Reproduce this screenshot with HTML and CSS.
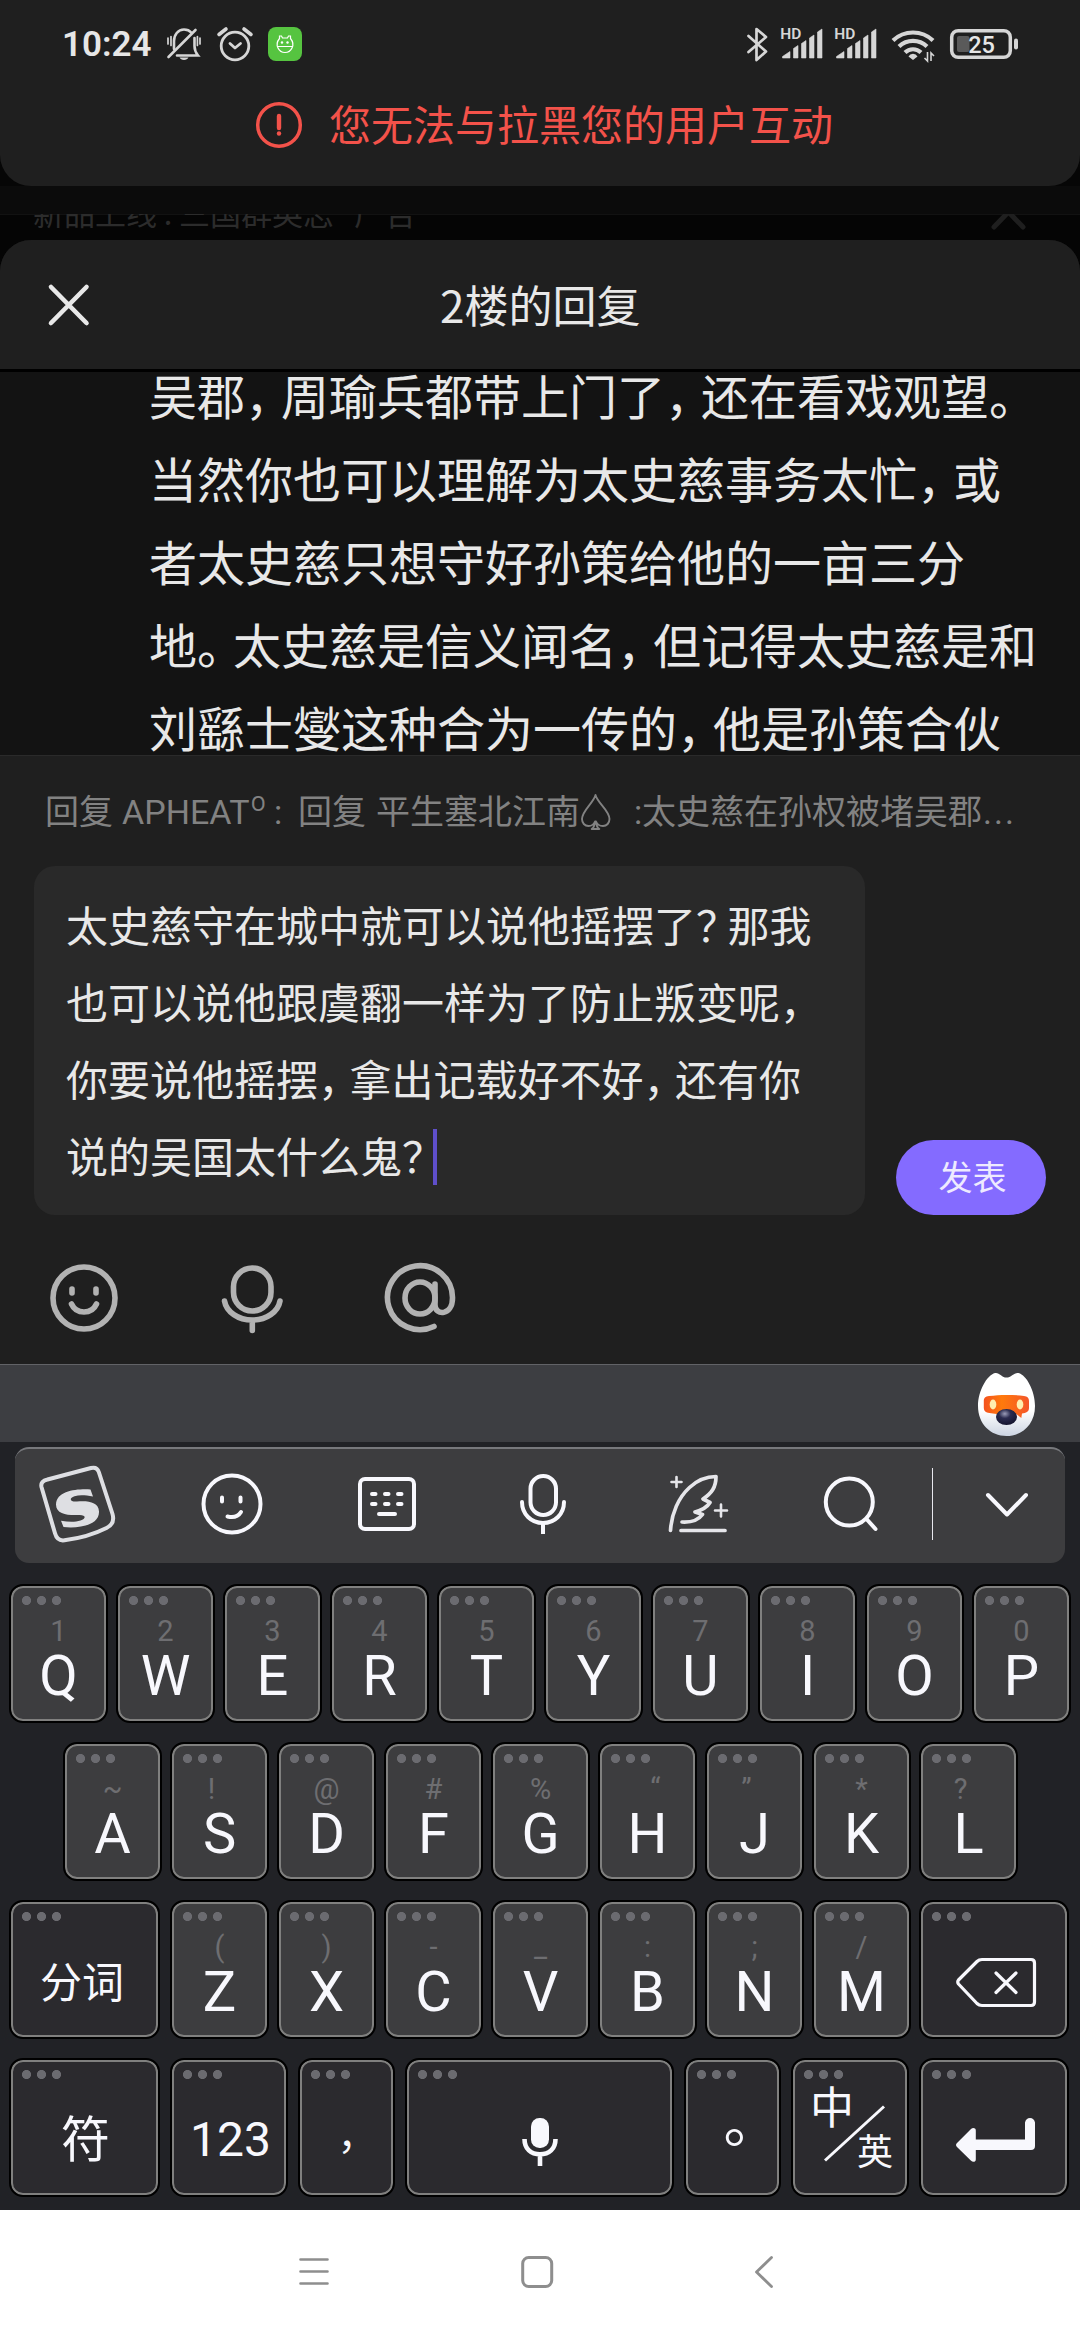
FILE: index.html
```html
<!DOCTYPE html>
<html lang="zh-CN">
<head>
<meta charset="utf-8">
<meta name="viewport" content="width=1080">
<title>2楼的回复</title>
<link rel="stylesheet" href="styles.css">
</head>
<body>
<div class="screen">

<div class="toast">
  <div class="status">
    <span class="clock">10:24</span>
    <svg class="st-bell" width="36" height="36" viewBox="166 27 36 36" fill="none" stroke="#d6d6d6" stroke-width="2.6" stroke-linecap="round">
      <path d="M174 49V41c0-6 4-11.500 10-11.500 3 0 5.500 1 7.200 3M194.500 38v8c0 5 1.500 7 3.500 9.500H177"/>
      <path d="M168.500 57 195.500 30"/><path d="M168 38v6M171 36.500v9M200 38v6M197.400 36.500v9" stroke-width="1.700"/>
      <path d="M179.500 57.500h9c-.8 1.600-2.300 2.500-4.500 2.500s-3.800-.9-4.500-2.500z" fill="#d6d6d6" stroke="none"/>
    </svg>
    <svg class="st-alarm" width="36" height="36" viewBox="217 27 36 36" fill="none" stroke="#d6d6d6" stroke-width="2.800" stroke-linecap="round" stroke-linejoin="round">
      <circle cx="235" cy="46" r="13.800"/><path d="m230 43.500 5 4.500 5.500-4.500"/><path d="m219 34.500 7-5.500M251 34.500 244 29" stroke-width="3.600"/>
    </svg>
    <svg class="st-app" width="34" height="34" viewBox="268 27 34 34">
      <rect x="268" y="27" width="34" height="34" rx="8" fill="#56c440"/>
      <path d="M279.500 38.500v-2.500h2l1 2h5l1-2h2v2.500c2.500 3 3 6.500 1.500 9.500-1.300 2.800-4 4.500-7 4.500s-5.700-1.700-7-4.500c-1.500-3-1-6.500 1.500-9.500zM277.500 46.500h15" fill="none" stroke="#fff" stroke-width="1.200"/>
      <circle cx="282" cy="42.500" r="1.200" fill="#fff"/><circle cx="287.500" cy="42.500" r="1.200" fill="#fff"/>
    </svg>
    <svg class="st-bt" width="22" height="36" viewBox="746 26 22 36" fill="none" stroke="#d6d6d6" stroke-width="2.700" stroke-linejoin="round" stroke-linecap="round">
      <path d="m747.500 36 17.500 15.500-9.500 8.500V29l9.500 8-17.500 15"/>
    </svg>
    <svg class="st-sig" width="43" height="34" viewBox="780 27 43 34" fill="#d6d6d6">
      <text class="hd" x="779.300" y="39">HD</text>
      <path d="M781.500 58v-1.500l7.500-5V58zM792.500 58V48.500l4.500-3V58zM800.500 58V43.500l4.500-3V58zM808.500 58V38l4.500-3V58zM816.500 58V32l4.500-3V58z" stroke="#d6d6d6" stroke-width=".6" stroke-linejoin="round"/>
    </svg>
    <svg class="st-sig2" width="43" height="34" viewBox="780 27 43 34" fill="#d6d6d6">
      <text class="hd" x="779.300" y="39">HD</text>
      <path d="M781.500 58v-1.500l7.500-5V58zM792.500 58V48.500l4.500-3V58zM800.500 58V43.500l4.500-3V58zM808.500 58V38l4.500-3V58zM816.500 58V32l4.500-3V58z" stroke="#d6d6d6" stroke-width=".6" stroke-linejoin="round"/>
    </svg>
    <svg class="st-wifi" width="44" height="36" viewBox="890 27 44 36" fill="none" stroke="#d6d6d6">
      <path d="M892 40.500a29 29 0 0 1 40 0M898 46.500a20.500 20.500 0 0 1 28 0M904 52.500a11.500 11.500 0 0 1 16 0" stroke-width="4.200"/>
      <path d="m907.500 56.500a5 5 0 0 1 9 0l-4.500 3.500z" fill="#d6d6d6" stroke="none"/>
      <path d="M926.500 52v9l-3-3M930 61v-8l3 3" stroke-width="1.600"/>
    </svg>
    <svg class="st-bat" width="69" height="32" viewBox="949 28 69 32">
      <rect x="950.700" y="30.700" width="58.600" height="26.600" rx="6.500" fill="none" stroke="#d6d6d6" stroke-width="3.500"/>
      <rect x="956" y="36" width="12.500" height="16" rx="2" fill="#5a5a5a"/><rect x="1013" y="38.500" width="4" height="11" rx="2" fill="#d6d6d6"/>
      <text class="pct" x="980.500" y="53" text-anchor="middle">25</text>
    </svg>
  </div>
  <div class="notice">
    <svg width="48" height="48" viewBox="255 100 48 48" fill="none" stroke="#f3524a" stroke-linecap="round"><circle cx="279" cy="124" r="21.300" stroke-width="3.500"/><path d="M279 115v12" stroke-width="4.400"/><circle cx="279" cy="132.500" r="2.200" fill="#f3524a" stroke="none"/></svg>
    <span>您无法与拉黑您的用户互动</span>
  </div>
</div>

<div class="behind">
  <span class="ad">新品上线<i class="ad-colon">:</i>三国群英志<i class="ad-gap"></i>广告</span>
  <svg class="ad-x" width="40" height="40" viewBox="988 194 40 40" stroke="#1f1f1f" stroke-width="5" stroke-linecap="round"><path d="m994 197 29 30M1023 197l-29 30"/></svg>
</div>

<div class="sheet">
  <div class="head">
    <svg width="44" height="44" viewBox="47 284 44 44" stroke="#e8e8e8" stroke-width="4.600" stroke-linecap="round"><path d="m51 288 35.500 36M86.500 288 51 324"/></svg>
    <h1>2楼的回复</h1>
  </div>
  <div class="post"><p>吴郡<i>，</i>周瑜兵都带上门了<i>，</i>还在看戏观望<i>。</i><br>当然你也可以理解为太史慈事务太忙<i>，</i>或<br>者太史慈只想守好孙策给他的一亩三分<br>地<i>。</i>太史慈是信义闻名<i>，</i>但记得太史慈是和<br>刘繇士燮这种合为一传的<i>，</i>他是孙策合伙</p></div>
</div>

<div class="composer">
  <div class="quote"><span>回复</span><span class="q-name">APHEAT<b class="ord">º</b></span><span class="q-c1">:</span><span class="q-r">回复</span><span class="q-who">平生塞北江南</span><svg class="q-spade" width="31" height="36" viewBox="581 792 31 36" fill="none" stroke="#828282" stroke-width="1.900" stroke-linejoin="round"><path d="M596.500 793c2 8 14 15.500 14 24 0 4-2.700 7-6.500 7-3.300 0-6-2-7-4.500.2 3 1 6 3.300 7.500h-7.600c2.300-1.500 3.100-4.500 3.300-7.500-1 2.500-3.200 4.500-6.500 4.500-3.800 0-6.500-3-6.500-7 0-8.500 11.500-16 13.500-24z"/></svg><span class="q-c2">:</span><span class="q-t">太史慈在孙权被堵吴郡</span><span class="q-e">...</span></div>
  <div class="entry">
    <div class="field">太史慈守在城中就可以说他摇摆了<i class="qm">？</i>那我<br>也可以说他跟虞翻一样为了防止叛变呢<i>，</i><br>你要说他摇摆<i>，</i>拿出记载好不好<i>，</i>还有你<br>说的吴国太什么鬼<i class="qm">？</i><b class="caret"></b></div>
    <button class="send">发表</button>
  </div>
  <div class="tools">
    <svg width="72" height="72" viewBox="48 1262 72 72" fill="none" stroke="#b2b2b2" stroke-width="5.600" stroke-linecap="round"><circle cx="84" cy="1298" r="31"/><path d="M72 1289v4M96 1289v4"/><path d="M71.500 1304c2.500 5.500 7 8 12.500 8s10-2.500 12.500-8" /></svg>
    <svg width="72" height="72" viewBox="216 1262 72 72" fill="none" stroke="#b2b2b2" stroke-width="5.600" stroke-linecap="round"><rect x="233.500" y="1268" width="37.500" height="43" rx="18.700"/><path d="M224.500 1301a28 22 0 0 0 55.500 0M252.300 1322v8.500"/></svg>
    <svg width="74" height="74" viewBox="384 1261 74 74" fill="none" stroke="#b2b2b2" stroke-width="5.600" stroke-linecap="round"><ellipse cx="420" cy="1298" rx="15" ry="16"/><path d="M435 1284v21c0 11 17.500 11 17.500-7a32.500 32 0 1 0-18.500 28.500"/></svg>
  </div>
</div>

<div class="keyboard">
  <div class="strip">
    <svg width="62" height="68" viewBox="975 1371 62 68">
      <defs>
        <linearGradient id="face" x1="0" y1="0" x2="0" y2="1"><stop offset=".6" stop-color="#fff"/><stop offset="1" stop-color="#ccd4e2"/></linearGradient>
        <linearGradient id="mask" x1="0" y1="0" x2="1" y2="0"><stop offset="0" stop-color="#f4511e"/><stop offset=".4" stop-color="#ff7a0c"/><stop offset="1" stop-color="#f4562a"/></linearGradient>
        <radialGradient id="nose" cx=".42" cy=".3" r=".7"><stop offset="0" stop-color="#9a9cb8"/><stop offset=".4" stop-color="#2b2c50"/><stop offset="1" stop-color="#14142e"/></radialGradient>
      </defs>
      <path d="M995 1373c4-1 7 4.500 11.500 4.500s8-5.500 12-4.500c8 2 16.500 18 16.500 33 0 18-12.500 30-28.500 30s-28.500-12-28.500-30c0-15 9-31 17-33z" fill="url(#face)"/>
      <path d="M989 1396c11-1.500 24-1.500 35 0 3.500.5 5 2 5 5v7c0 4-3 5-7 5.500l-.7 4.500-5-4c-6 1-14 1-27-1-3.500-.5-5.500-2-5.500-5v-7c0-3 1.500-4.500 5.200-5z" fill="url(#mask)"/>
      <ellipse cx="993" cy="1404.500" rx="3.300" ry="5" fill="#ffefb0"/><ellipse cx="1020" cy="1404.500" rx="3.300" ry="5" fill="#ffefb0"/>
      <ellipse cx="1006.500" cy="1417" rx="10.500" ry="8" fill="url(#nose)"/>
    </svg>
  </div>
  <div class="bar">
    <svg class="b-logo" width="78" height="78" viewBox="38 1466 78 78" fill="none" stroke="#dedfe3" stroke-width="4"><path d="M47.500 1480.500 91 1469c4-1 6.500 0 7.800 4L112.500 1515c2 7-1 11.500-6 14-12 6-28 10.500-42 12.300-5 .7-8-1.500-9.500-7L41.500 1488c-1-4 1.500-6.500 6-7.500z"/><path d="M90.500 1490.500c-13.500-.8-34 1-34.500 15 0 10 12 11 23 10.500 7-.3 7.500 3.500 1.500 5.500-5.500 1.700-12 1.500-19.500.2l2.500 6.300c14 1.500 36-1 35.500-15.500-.2-9.500-11-11-22-10-7 .6-8.500-3.500-2.500-5.300 5-1.500 11-1 18.500.2z" fill="#dedfe3" stroke="none"/></svg>
    <svg class="b-smile" width="64" height="64" viewBox="199.500 1472.500 64 64" fill="none" stroke="#f8f8fd" stroke-width="4" stroke-linecap="round"><circle cx="231.500" cy="1504.500" r="28.500"/><path d="M221.500 1498v4M240 1498v4M227 1517c6 1.500 11-.5 13.500-4.500"/></svg>
    <svg class="b-keys" width="60" height="56" viewBox="357 1477 60 56" fill="none" stroke="#f8f8fd" stroke-width="4" stroke-linecap="round"><rect x="360" y="1480" width="54" height="50" rx="5"/><path d="M372 1495h3.500M385 1495h3.500M398 1495h3.500M372 1505h3.500M385 1505h3.500M398 1505h3.500M379 1515h16"/></svg>
    <svg class="b-mic" width="50" height="64" viewBox="518 1472 50 64" fill="none" stroke="#f8f8fd" stroke-width="4"><rect x="530.500" y="1476" width="25.500" height="39" rx="12.700"/><path d="M522 1502c0 12 9 21 21 21s21-9 21-21" stroke-linecap="round"/><path d="M543 1523v11"/></svg>
    <svg class="b-pen" width="62" height="62" viewBox="668 1474 62 62" fill="none" stroke="#e6e6ea" stroke-width="3.700" stroke-linecap="round" stroke-linejoin="round"><path d="M670.500 1531.500c1-17 8-33 19-43 8-7.500 17-11 26.500-11 0 11-4.500 17-13 22.500l7 3.500c-3 5-8 7.500-15 9.500l7.500 2.500c-4 5.500-11.500 8-20.500 7.500M681 1531.500h44"/><path d="M676.500 1478v10M671.500 1483h10M721 1505.500v12M715 1511.500h12" stroke-width="2.600"/></svg>
    <svg class="b-find" width="58" height="58" viewBox="822 1474 58 58" fill="none" stroke="#f8f8fd" stroke-width="4" stroke-linecap="round"><circle cx="849.300" cy="1501" r="23.500"/><path d="m866.500 1518 9 10"/></svg>
    <span class="b-line"></span>
    <svg class="b-down" width="46" height="28" viewBox="984 1490 46 28" fill="none" stroke="#f8f8fd" stroke-width="4" stroke-linecap="round" stroke-linejoin="round"><path d="m988 1495 19 19.500 19-19.500"/></svg>
  </div>

  <div class="row">
    <div class="key"><small>1</small>Q</div><div class="key"><small>2</small>W</div><div class="key"><small>3</small>E</div><div class="key"><small>4</small>R</div><div class="key"><small>5</small>T</div><div class="key"><small>6</small>Y</div><div class="key"><small>7</small>U</div><div class="key"><small>8</small>I</div><div class="key"><small>9</small>O</div><div class="key"><small>0</small>P</div>
  </div>
  <div class="row second">
    <div class="key"><small>~</small>A</div><div class="key"><small class="left">!</small>S</div><div class="key"><small>@</small>D</div><div class="key"><small>#</small>F</div><div class="key"><small>%</small>G</div><div class="key"><small class="right">“</small>H</div><div class="key"><small class="left">”</small>J</div><div class="key"><small>*</small>K</div><div class="key"><small class="left">?</small>L</div>
  </div>
  <div class="row">
    <div class="key dark w-side k-split">分词</div><div class="key"><small>(</small>Z</div><div class="key"><small>)</small>X</div><div class="key"><small>-</small>C</div><div class="key"><small>_</small>V</div><div class="key"><small>:</small>B</div><div class="key"><small>;</small>N</div><div class="key"><small>/</small>M</div><div class="key dark w-back"><svg width="84" height="54" viewBox="953 1955 84 54" fill="none" stroke="#f8f8fd" stroke-width="3.200" stroke-linejoin="round" stroke-linecap="round"><path d="M957.500 1980 976 1961.500q2-2 5-2h49q3.500 0 3.500 3.500v39q0 3.500-3.500 3.500h-49q-3 0-5-2L957.500 1984q-1.500-2 0-4zM995 1973l20 19.500M1015 1973l-20 19.500"/></svg></div>
  </div>
  <div class="row">
    <div class="key dark w-side k-sym">符</div>
    <div class="key dark w-num k-num">123</div>
    <div class="key dark w-p k-comma">，</div>
    <div class="key dark w-space"><svg width="40" height="52" viewBox="520 2116 40 52"><rect x="531" y="2118" width="18" height="30" rx="8.500" fill="#f8f8fd"/><path d="M524.500 2139c0 10 6.500 15.300 15.500 15.300s15.500-5.300 15.500-15.300M540 2154v12" fill="none" stroke="#f8f8fd" stroke-width="4.600"/></svg></div>
    <div class="key dark w-p k-stop">。</div>
    <div class="key dark w-lang"><span class="zh">中</span><svg width="64" height="60" viewBox="820 2103 64 60" stroke="#f8f8fd" stroke-width="3"><path d="m823 2160.500 59-54"/></svg><span class="en">英</span></div>
    <div class="key dark w-enter"><svg width="84" height="50" viewBox="953 2115 84 50" fill="#f8f8fd"><path d="M956.500 2142.500 970 2129q2-1.500 4-.5.800.4.800 2v9H1024v-17q1-4.500 5-4.500t5 4.500V2146q0 4-4 4H974.800v9.500q0 1.500-1 2-2 .8-4-1L956.500 2147.500q-3-2.500 0-5z"/></svg></div>
  </div>
</div>

<div class="nav">
  <svg class="n-menu" width="32" height="32" viewBox="298 2256 32 32" stroke="#8e8e8e" stroke-width="2.600" stroke-linecap="round"><path d="M300.500 2259.500h27M300.500 2271.500h27M300.500 2283.500h27"/></svg>
  <svg class="n-home" width="34" height="34" viewBox="520 2255 34 34" fill="none" stroke="#8e8e8e" stroke-width="3"><rect x="522.700" y="2257.500" width="29" height="29" rx="6"/></svg>
  <svg class="n-back" width="22" height="34" viewBox="753 2255 22 34" fill="none" stroke="#8e8e8e" stroke-width="2.800" stroke-linecap="round" stroke-linejoin="round"><path d="m771.500 2257.500-15 14.500 15 14.500"/></svg>
</div>

</div>
</body>
</html>
```

FILE: styles.css
```css
* { box-sizing: border-box; }
body { margin: 0; background: #060606; font-family: "Noto Sans CJK SC", "Noto Sans", sans-serif; color: #e8e8e8; }
svg { display: block; flex: none; overflow: visible; }
i { font-style: normal; letter-spacing: -.25em; }
.screen { width: 1080px; height: 2340px; display: flex; flex-direction: column; overflow: hidden; background: #060606; }

/* status bar and notice */
.toast { height: 186px; background: #1f1f1f; border-radius: 0 0 31px 31px; position: relative; }
.status { height: 88px; display: flex; align-items: center; padding-left: 62px; }
.clock { font: 600 35px/40px Roboto, sans-serif; width: 104px; color: #e6e6e6; padding-top: 1px; }
.st-bell { margin: 2px 15px 0 0; }
.st-alarm { margin: 2px 15px 0 0; }
.st-bt { margin-left: 445px; }
.st-sig { margin-left: 12px; }
.st-sig2 { margin-left: 11px; }
.st-wifi { margin: 2px 0 0 13px; }
.st-bat { margin-left: 15px; }
.hd { font: 600 15.5px Roboto, sans-serif; }
.pct { font: 500 23.500px Roboto, sans-serif; fill: #e6e6e6; }
.notice { display: flex; align-items: center; padding-left: 255px; height: 74px; color: #f3524a; font-size: 42px; line-height: 74px; }
.notice span { margin-left: 26px; margin-top: -5px; }

/* dimmed page behind the sheet */
.behind { height: 86px; margin-bottom: -32px; padding: 0 52px 0 33px; display: flex; justify-content: space-between; align-items: flex-start; background: linear-gradient(#0b0b0b 28px, #121212 28px, #121212 29px, #050505 29px); }
.ad { font-size: 31px; line-height: 46px; margin-top: 3px; color: #2c2c2c; clip-path: inset(25px 0 0 0); }
.ad-colon { display: inline-block; width: 22px; text-align: center; letter-spacing: 0; }
.ad-gap { display: inline-block; width: 20px; }
.ad-x { margin-top: 8px; clip-path: inset(20px 0 0 0); }

/* reply sheet */
.sheet { position: relative; background: #131313; border-radius: 31px 31px 0 0; height: 515px; overflow: hidden; }
.head { height: 132px; background: #1f1f1f; border-bottom: 3px solid #000; display: flex; align-items: center; padding-left: 47px; }
.head h1 { margin: -2px 0 0 349px; font-size: 44px; font-weight: 400; line-height: 60px; }
.post { height: 383px; overflow: hidden; padding-left: 149px; }
.post p { margin: -19px 0 0; font-size: 48px; line-height: 83px; white-space: nowrap; }

/* composer */
.composer { height: 609px; background: #1f1f1f; border-top: 1px solid #2a2a2a; }
.quote { height: 110px; padding: 2px 0 0 45px; display: flex; align-items: center; font: 34px/50px Roboto, "Noto Sans CJK SC", sans-serif; color: #828282; white-space: nowrap; }
.q-name { margin-left: 9px; width: 148px; }
.ord { font-weight: 300; font-size: 39px; line-height: 0; }
.q-c1 { margin-left: 4px; width: 24px; }
.q-who { margin-left: 10px; }
.q-c2 { margin-left: 23px; width: 8px; }
.q-e { margin-left: 1px; letter-spacing: 2px; }
.entry { display: flex; align-items: flex-end; padding-left: 34px; }
.field { width: 831px; height: 349px; border-radius: 21px; background: #292929; padding: 19px 0 0 32px; font-size: 42px; line-height: 77px; white-space: nowrap; }
.caret { display: inline-block; width: 4px; height: 56px; background: #5f4fca; vertical-align: -10px; margin: -10px 0 -10px -1px; transform: translateY(-8px); }
.send { margin-left: 31px; width: 150px; height: 75px; border: 0; border-radius: 38px; background: #846bff; color: #eeeaff; font: 34px/70px "Noto Sans CJK SC", sans-serif; padding: 0 0 3px 3px; }
.tools { display: flex; align-items: center; height: 148px; padding: 18px 0 0 48px; gap: 96px; }

/* keyboard */
.keyboard { height: 846px; background: #212226; font-family: Roboto, "Noto Sans CJK SC", sans-serif; }
.strip { height: 78px; background: #3d3e42; border-top: 1px solid #626367; padding: 6px 0 0 975px; }
.bar { margin: 5px 15px 21px; height: 116px; border-radius: 14px; background: #3d3d3f; border-top: 2px solid #77787c; display: flex; align-items: center; padding: 0 0 4px 23px; }
.b-smile { margin-left: 83.500px; }
.b-keys { margin-left: 93.500px; }
.b-mic { margin-left: 101px; }
.b-pen { margin-left: 100px; }
.b-find { margin-left: 92px; }
.b-line { width: 1px; height: 72px; background: #e8e8ee; margin-left: 52px; }
.b-down { margin-left: 51px; }
.row { display: flex; gap: 8px; padding-left: 9px; margin-bottom: 19px; }
.second { padding-left: 63px; }
.key { position: relative; flex: none; width: 99px; height: 139px; border: 2px solid #000; border-radius: 14px; background: #3d3d3f; box-shadow: inset 0 0 0 2px #80807f; padding-top: 30px; text-align: center; color: #f8f8fd; font-size: 56px; line-height: 56px; }
.key::before { content: ""; position: absolute; left: 11px; top: 10px; width: 39px; height: 9px; background: radial-gradient(circle at 4.5px 4.5px, #6b6b70 4.2px, transparent 4.9px) 0 0 / 15px 9px; }
.key small { display: block; height: 30px; margin-bottom: 2px; font-size: 29px; line-height: 30px; color: #6e6e71; }
.key small.left { transform: translateX(-8px); }
.key small.right { transform: translateX(8px); }
.dark { background: #2b2a2e; display: flex; justify-content: center; padding-top: 0; }
.dark svg { align-self: flex-start; }
.w-side { width: 151px; margin-right: 2px; }
.w-back, .w-enter { width: 150px; }
.w-back svg { margin: 53px 0 0 3px; }
.w-num { width: 118px; margin-right: 2px; }
.w-p { width: 97px; margin-right: 2px; }
.w-space { width: 269px; margin-right: 2px; }
.w-space svg { margin-top: 56px; }
.w-enter svg { margin: 55px 0 0 3px; }
.k-split { font: 42px/60px "Noto Sans CJK SC", sans-serif; padding: 48px 5px 0 0; }
.k-sym { font: 49px/60px "Noto Sans CJK SC", sans-serif; padding: 46px 0 0 2px; }
.k-num { font-size: 48px; padding: 52px 0 0 3px; }
.k-comma, .k-stop { font: 400 39px/60px "Noto Sans CJK SC", sans-serif; padding: 42px 0 0 21px; }
.k-stop { font-size: 56px; padding: 28px 0 0 38px; }
.w-lang { width: 118px; margin-right: 2px; display: grid; grid-template-columns: 1fr; }
.zh, .en, .w-lang svg { grid-area: 1 / 1; justify-self: start; align-self: start; font-family: "Noto Sans CJK SC", sans-serif; }
.zh { font-size: 44px; line-height: 50px; margin: 20px 0 0 17px; }
.en { font-size: 36px; line-height: 40px; margin: 69px 0 0 64px; }
.w-lang svg { margin: 43px 0 0 29px; }

/* system navigation */
.nav { height: 130px; background: #fff; display: flex; align-items: center; padding: 0 0 6px 298px; }
.n-home { margin-left: 190px; }
.n-back { margin-left: 199px; }
```
